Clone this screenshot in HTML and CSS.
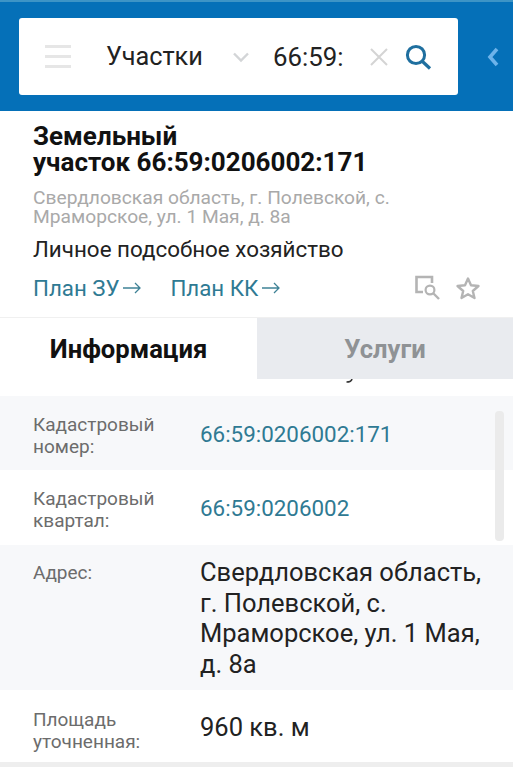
FILE: index.html
```html
<!DOCTYPE html>
<html lang="ru">
<head>
    <meta charset="UTF-8">
    <meta name="viewport" content="width=device-width, initial-scale=1.0">
    <title>Земельный участок</title>
    <link rel="stylesheet" href="styles.css">
</head>
<body>
    <header class="top-bar">
        <div class="search-box">
            <span class="burger"><i></i><i></i><i></i></span>
            <span class="search-type">Участки</span>
            <svg class="chevron" width="18" height="12" viewBox="0 0 18 12"><path d="M2 2.500 9 9.500 16 2.500" fill="none" stroke="#d3d5d7" stroke-width="2.400"/></svg>
            <span class="search-value">66:59:</span>
            <svg class="clear" width="20" height="20" viewBox="0 0 20 20"><path d="M2 2 18 18M18 2 2 18" fill="none" stroke="#d4d4d4" stroke-width="2"/></svg>
            <svg class="magnifier" width="28" height="28" viewBox="0 0 28 28"><circle cx="12" cy="12" r="8.600" fill="none" stroke="#1f6f9f" stroke-width="3"/><path d="M18.500 18.500 26 25.500" fill="none" stroke="#1f6f9f" stroke-width="3.200"/></svg>
        </div>
        <svg class="collapse" width="14" height="22" viewBox="0 0 14 22"><path d="M11 3 4 11 11 19" fill="none" stroke="#6db3ea" stroke-width="3.600"/></svg>
    </header>

    <section class="summary">
        <h1>Земельный<br>участок 66:59:0206002:171</h1>
        <p class="address">Свердловская область, г. Полевской, с.<br>Мраморское, ул. 1 Мая, д. 8а</p>
        <p class="usage">Личное подсобное хозяйство</p>
        <div class="plan-row">
            <a class="plan-link">План ЗУ<svg width="20" height="12" viewBox="0 0 20 12"><path d="M1 6H18M13 1 18 6 13 11" fill="none" stroke="#3f8296" stroke-width="1.300"/></svg></a>
            <a class="plan-link">План КК<svg width="20" height="12" viewBox="0 0 20 12"><path d="M1 6H18M13 1 18 6 13 11" fill="none" stroke="#3f8296" stroke-width="1.300"/></svg></a>
            <span class="plan-icons">
                <svg width="28" height="26" viewBox="0 0 28 26"><path d="M9 17H2.500V2H18V8" fill="none" stroke="#b4b4b4" stroke-width="2.600"/><circle cx="16" cy="15" r="4.400" fill="none" stroke="#b4b4b4" stroke-width="2.200"/><path d="M19.500 18.500 25 24" fill="none" stroke="#b4b4b4" stroke-width="2.400"/></svg>
                <svg width="26" height="24" viewBox="0 0 26 24"><path d="M13 2.500 16 9.300 23.500 10 17.800 15 19.500 22 13 18.300 6.500 22 8.200 15 2.500 10 10 9.300Z" fill="none" stroke="#b4b4b4" stroke-width="2.400" stroke-linejoin="round"/></svg>
            </span>
        </div>
    </section>

    <nav class="tabs">
        <div class="tab tab-active">Информация</div>
        <div class="tab">Услуги</div>
    </nav>

    <div class="info-gap">
        <!-- tail of a letter scrolled under the tabs -->
        <svg class="scrolled-away" width="8" height="4" viewBox="0 0 8 4"><path d="M7 0C6.500 2 5 3 1.500 3" fill="none" stroke="#333" stroke-width="1.600"/></svg>
    </div>

    <div class="info-list">
        <div class="info-row row-tint row-first">
            <div class="info-label">Кадастровый<br>номер:</div>
            <div class="info-link">66:59:0206002:171</div>
        </div>
        <div class="info-row row-second">
            <div class="info-label">Кадастровый<br>квартал:</div>
            <div class="info-link">66:59:0206002</div>
        </div>
        <div class="info-row row-tint row-address">
            <div class="info-label">Адрес:</div>
            <div class="info-value value-address">Свердловская область,<br>г. Полевской, с.<br>Мраморское, ул. 1 Мая,<br>д. 8а</div>
        </div>
        <div class="info-row row-area">
            <div class="info-label">Площадь<br>уточненная:</div>
            <div class="info-value value-area">960 кв. м</div>
        </div>
        <div class="scroll-thumb"></div>
    </div>
    <div class="bottom-edge"></div>
</body>
</html>
```

FILE: styles.css
```css
body {
    margin: 0;
    height: 767px;
    overflow: hidden;
    background-color: #fff;
    color: #1a1a1a;
    font-family: Roboto, "Liberation Sans", sans-serif;
}

.top-bar {
    display: flex;
    align-items: center;
    height: 111px;
    padding: 0 0 0 19px;
    box-sizing: border-box;
    background-color: #0570b8;
    border-top: 2px solid #3d94c6;
}

.search-box {
    display: flex;
    align-items: center;
    width: 439px;
    height: 77px;
    box-sizing: border-box;
    padding-left: 26px;
    background-color: #fff;
    border-radius: 3px;
}

.burger {
    display: flex;
    flex-direction: column;
    gap: 7px;
    width: 26px;
}

.burger i {
    display: block;
    height: 3px;
    background-color: #e6e6e6;
}

.search-type {
    margin-left: 35px;
    width: 126px;
    font-size: 25.3px;
    color: #222;
}

.chevron {
    flex: none;
}

.search-value {
    margin-left: 23px;
    width: 82px;
    font-size: 25.8px;
    color: #222;
}

.clear {
    margin-left: 14px;
}

.magnifier {
    margin-left: 15px;
}

.collapse {
    margin-left: 28px;
}

.summary {
    height: 206px;
    box-sizing: border-box;
    padding: 12px 33px 0;
}

h1 {
    margin: 0;
    font-size: 26px;
    line-height: 26px;
    font-weight: 700;
    color: #111;
}

.address {
    margin: 13px 0 0;
    font-size: 19.2px;
    line-height: 19px;
    color: #a9a9a9;
}

.usage {
    margin: 10px 0 0;
    font-size: 22.4px;
    line-height: 26px;
    color: #222;
}

.plan-row {
    display: flex;
    align-items: center;
    margin-top: 13px;
}

.plan-link {
    display: flex;
    align-items: center;
    gap: 3px;
    margin-right: 28px;
    font-size: 22.3px;
    color: #2f7a93;
}

.plan-icons {
    display: flex;
    align-items: center;
    gap: 13px;
    margin-left: auto;
    margin-right: -1px;
}

.tabs {
    display: flex;
    height: 62px;
    border-top: 1px solid #f0f0f0;
    box-sizing: border-box;
}

.tab {
    display: flex;
    align-items: center;
    justify-content: center;
    width: 256px;
    font-size: 25.6px;
    font-weight: 700;
    color: #8f9295;
    background-color: #e9ebef;
}

.tab-active {
    width: 257px;
    color: #111;
    background-color: #fff;
}

.info-gap {
    height: 17px;
    padding-left: 345px;
    box-sizing: border-box;
}

.scrolled-away {
    display: block;
}

.info-list {
    position: relative;
}

.info-row {
    display: flex;
    box-sizing: border-box;
    padding: 18px 0 0 33px;
}

.row-tint {
    background-color: #f7f8fa;
}

.row-first {
    height: 74px;
}

.row-second {
    height: 75px;
}

.row-address {
    height: 145px;
    padding-top: 17px;
}

.row-area {
    height: 72px;
    padding-top: 19px;
}

.info-label {
    width: 167px;
    flex: none;
    font-size: 19px;
    line-height: 22px;
    color: #6c6c6c;
}

.info-link {
    font-size: 22.4px;
    line-height: 40px;
    color: #2f7a93;
}

.info-value {
    font-size: 25.5px;
    line-height: 30.7px;
    white-space: nowrap;
    color: #222;
}

.value-address {
    margin-top: -5px;
}

.value-area {
    margin-top: 3px;
}

.scroll-thumb {
    position: absolute;
    top: 15px;
    right: 9px;
    width: 9px;
    height: 130px;
    border-radius: 4px;
    background-color: #ebebeb;
}

.bottom-edge {
    height: 5px;
    background-color: #eee;
}
```
